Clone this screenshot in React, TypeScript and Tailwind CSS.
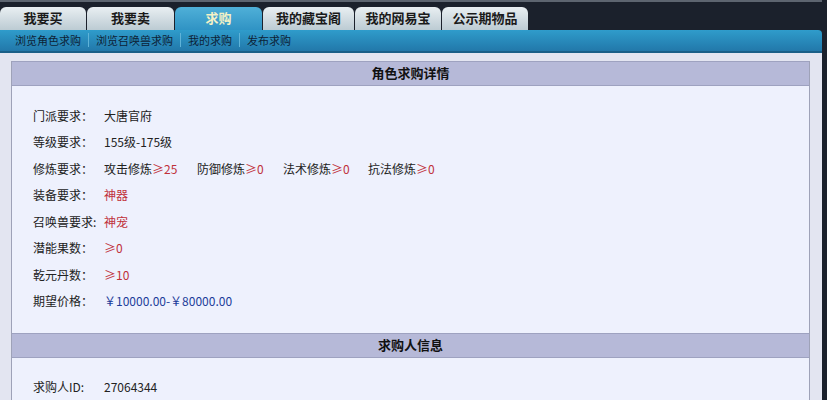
const font = { fontFamily: '"SimSun","Noto Sans CJK SC","Noto Sans",sans-serif' };

const tabs = [
  { label: "我要买", w: "w-[86px]" },
  { label: "我要卖", w: "w-[87px]" },
  { label: "求购", w: "w-[87px]", active: true },
  { label: "我的藏宝阁", w: "w-[91px]" },
  { label: "我的网易宝", w: "w-[86px]" },
  { label: "公示期物品", w: "w-[86px]" },
];

const subLinks = ["浏览角色求购", "浏览召唤兽求购", "我的求购", "发布求购"];

const Row = ({ label, children }: { label: string; children: React.ReactNode }) => (
  <div className="flex h-[26.5px] items-center whitespace-nowrap text-[12px] text-[#222]">
    <span className="min-w-[71px] shrink-0">{label}</span>
    <span className="flex items-center">{children}</span>
  </div>
);

const Red = ({ children }: { children: React.ReactNode }) => (
  <span className="text-[#c0303a]">{children}</span>
);

const Header = ({ title }: { title: string }) => (
  <div className="flex h-[25px] items-center justify-center border-y border-[#9ea2c0] bg-[#b6b9d8] text-[13px] font-bold text-[#111]">
    {title}
  </div>
);

export default function App() {
  return (
    <div className="flex h-[400px] w-[827px] overflow-hidden bg-[#1b212c]" style={font}>
      <div className="flex w-[822px] flex-col">
        {/* tabs */}
        <div className="flex h-[30px] items-end gap-[1px] border-t-2 border-[#5d6570] bg-[#1b212c]">
          {tabs.map((t) => (
            <div
              key={t.label}
              className={`flex h-[23px] ${t.w} items-center justify-center rounded-t-[6px] text-[13px] font-bold ${
                t.active
                  ? "bg-gradient-to-b from-[#4fb0d8] to-[#2f93c4] text-[#f4f2c6]"
                  : "bg-gradient-to-b from-[#e9eff2] to-[#bccbd3] text-[#1a1a1a]"
              }`}
            >
              {t.label}
            </div>
          ))}
        </div>
        {/* sub nav */}
        <div className="flex h-[23px] items-center rounded-tr-[4px] border-b-2 border-[#1a5f88] bg-gradient-to-b from-[#2f9ccb] to-[#2278aa] pl-[15px] text-[11px] text-[#0d2236]">
          {subLinks.map((s, i) => (
            <div key={s} className="flex items-center">
              {i > 0 && <span className="mx-[7px] h-[14px] w-px bg-[#5fb3d8]" />}
              <span>{s}</span>
            </div>
          ))}
        </div>
        {/* page */}
        <div className="flex-1 bg-[#e3e5f1] pl-[11px] pr-[12px] pt-[8px]">
          <div className="h-full border-x border-[#9ea2b8] bg-[#eef1fd]">
            <Header title="角色求购详情" />
            <div className="pb-[18px] pl-[21px] pt-[17px]">
              <Row label="门派要求：">大唐官府</Row>
              <Row label="等级要求：">155级-175级</Row>
              <Row label="修炼要求：">
                <span className="w-[93px]">
                  攻击修炼<Red>≥25</Red>
                </span>
                <span className="w-[86px]">
                  防御修炼<Red>≥0</Red>
                </span>
                <span className="w-[85px]">
                  法术修炼<Red>≥0</Red>
                </span>
                <span>
                  抗法修炼<Red>≥0</Red>
                </span>
              </Row>
              <Row label="装备要求：">
                <Red>神器</Red>
              </Row>
              <Row label="召唤兽要求:">
                <Red>神宠</Red>
              </Row>
              <Row label="潜能果数：">
                <Red>≥0</Red>
              </Row>
              <Row label="乾元丹数：">
                <Red>≥10</Red>
              </Row>
              <Row label="期望价格：">
                <span className="text-[#1c3d9a]">￥10000.00-￥80000.00</span>
              </Row>
            </div>
            <Header title="求购人信息" />
            <div className="pl-[21px] pt-[16px]">
              <Row label="求购人ID:">27064344</Row>
            </div>
          </div>
        </div>
      </div>
    </div>
  );
}
